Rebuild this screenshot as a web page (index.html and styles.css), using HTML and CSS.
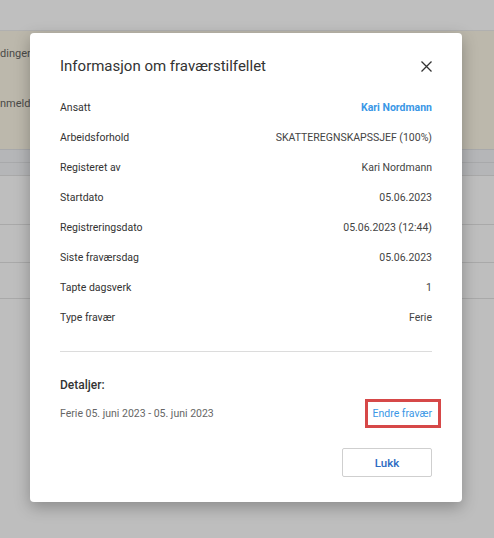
FILE: index.html
```html
<!DOCTYPE html>
<html lang="no">
<head>
<meta charset="utf-8">
<title>Informasjon om fraværstilfellet</title>
<link rel="stylesheet" href="styles.css">
</head>
<body>
<div class="page">
  <div class="topbar"></div>
  <div class="notice">
    <p class="notice-line first">dinger</p>
    <p class="notice-line">nmeld</p>
  </div>
  <div class="band"></div>
  <div class="band"></div>
  <div class="trow tall"></div>
  <div class="trow"></div>
  <div class="trow"></div>
</div>

<div class="modal" role="dialog">
  <div class="modal-head">
    <h2 class="modal-title">Informasjon om fraværstilfellet</h2>
    <button class="close" aria-label="Lukk">
      <svg width="11" height="11" viewBox="0 0 11 11"><path d="M0.5 0.5 L10.5 10.5 M10.5 0.5 L0.5 10.5" stroke="#333" stroke-width="1.3" fill="none"/></svg>
    </button>
  </div>
  <dl class="info">
    <div class="info-row"><dt>Ansatt</dt><dd class="link-strong">Kari Nordmann</dd></div>
    <div class="info-row"><dt>Arbeidsforhold</dt><dd>SKATTEREGNSKAPSSJEF (100%)</dd></div>
    <div class="info-row"><dt>Registeret av</dt><dd>Kari Nordmann</dd></div>
    <div class="info-row"><dt>Startdato</dt><dd>05.06.2023</dd></div>
    <div class="info-row"><dt>Registreringsdato</dt><dd>05.06.2023 (12:44)</dd></div>
    <div class="info-row"><dt>Siste fraværsdag</dt><dd>05.06.2023</dd></div>
    <div class="info-row"><dt>Tapte dagsverk</dt><dd>1</dd></div>
    <div class="info-row"><dt>Type fravær</dt><dd>Ferie</dd></div>
  </dl>
  <hr class="divider">
  <h3 class="details-title">Detaljer:</h3>
  <div class="details-row">
    <span class="details-text">Ferie 05. juni 2023 - 05. juni 2023</span>
    <a class="edit-link" href="#">Endre fravær</a>
  </div>
  <div class="modal-foot">
    <button class="btn">Lukk</button>
  </div>
</div>
</body>
</html>
```
FILE: styles.css
```css
* { box-sizing: border-box; }
html, body { margin: 0; padding: 0; }
body {
  width: 494px;
  height: 538px;
  overflow: hidden;
  background: #bebebe;
  font-family: Roboto, "Liberation Sans", Arial, sans-serif;
  position: relative;
}
.page { width: 100%; }
.topbar {
  height: 31px;
  background: #bfbfbf;
  border-bottom: 1px solid #b0b0b0;
}
.notice {
  height: 118px;
  background: #bcb8ac;
  padding: 0;
}
.notice-line {
  margin: 0;
  font-size: 11px;
  line-height: 14px;
  color: #4a4a48;
}
.notice-line.first { padding-top: 16px; }
.notice-line + .notice-line { margin-top: 36px; }
.band {
  height: 13px;
  background: #b5b6b8;
  border-top: 1px solid #a8a9ab;
}
.trow {
  height: 37px;
  border-top: 1px solid #a9a9a9;
  background: #bebebe;
}
.trow.tall { height: 49px; }
.trow + .trow { height: 38px; }
.trow:last-child { border-bottom: 1px solid #a9a9a9; height: 37px; }

.modal {
  position: absolute;
  left: 30px;
  top: 33px;
  width: 432px;
  height: 469px;
  background: #fff;
  border-radius: 4px;
  box-shadow: 0 5px 16px rgba(0, 0, 0, 0.28);
  padding: 22px 30px 25px;
  color: #333;
}
.modal-head {
  display: flex;
  align-items: center;
  justify-content: space-between;
  height: 22px;
}
.modal-title {
  margin: 0;
  font-size: 15px;
  font-weight: 400;
  line-height: 22px;
  color: #333;
}
.close {
  border: 0;
  background: none;
  padding: 0;
  margin-right: 0;
  width: 11px;
  height: 11px;
  display: flex;
}
.info { margin: 15px 0 0; }
.info-row {
  display: flex;
  justify-content: space-between;
  align-items: center;
  height: 30px;
  font-size: 10.5px;
}
.info-row dt { color: #333; }
.info-row dd { margin: 0; color: #444; }
.info-row dd.link-strong { color: #3a97e6; font-weight: 700; }
.divider {
  margin: 19px 0 0;
  border: 0;
  border-top: 1px solid #dcdcdc;
  height: 0;
}
.details-title {
  margin: 25px 0 0;
  font-size: 12px;
  font-weight: 500;
  line-height: 16px;
  color: #333;
}
.details-row {
  margin-top: 6px;
  display: flex;
  justify-content: space-between;
  align-items: center;
  height: 29px;
  font-size: 10.5px;
}
.details-text { color: #666; }
.edit-link {
  color: #3a97e6;
  text-decoration: none;
  border: 3px solid #d64848;
  height: 29px;
  display: flex;
  align-items: center;
  padding: 0 6px 0 5px;
  margin-right: -9px;
}
.modal-foot {
  margin-top: 20px;
  display: flex;
  justify-content: flex-end;
}
.btn {
  width: 90px;
  height: 29px;
  background: #fff;
  border: 1px solid #cfcfcf;
  border-radius: 2px;
  font-family: Roboto, "Liberation Sans", Arial, sans-serif;
  font-size: 11.5px;
  font-weight: 500;
  color: #2d6bc2;
}
```
